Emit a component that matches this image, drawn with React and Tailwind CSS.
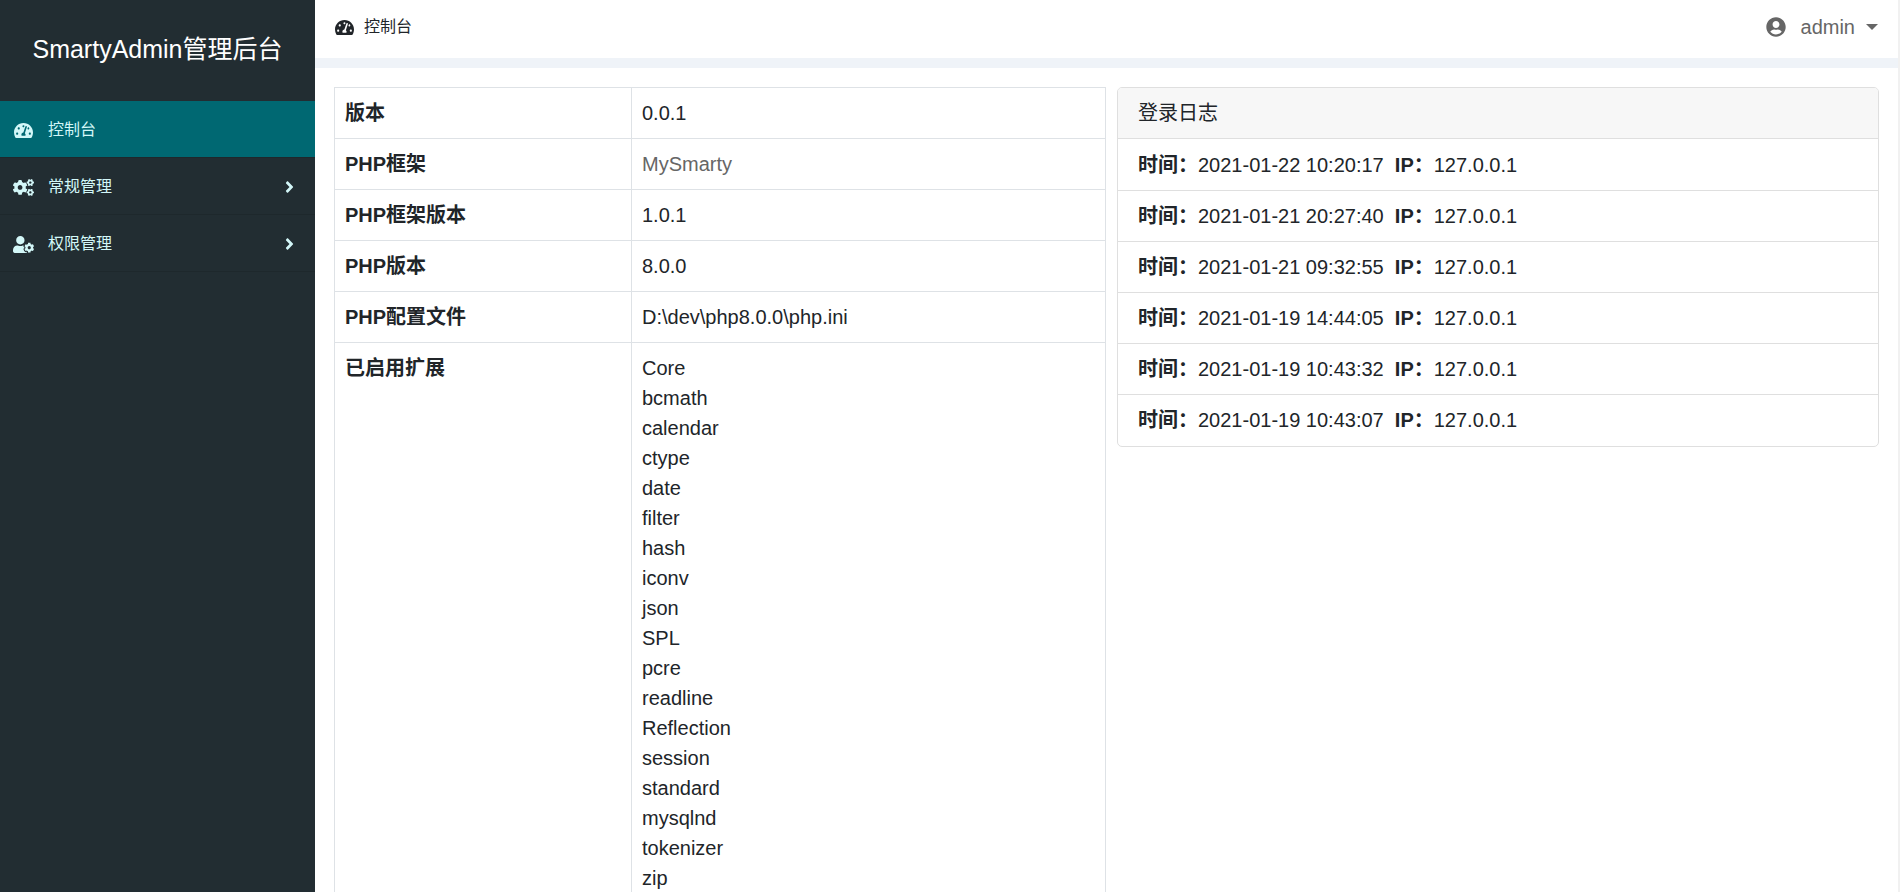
import { FaTachometerAlt, FaCogs, FaUserCog, FaAngleRight, FaUserCircle } from "react-icons/fa";

const menu = [
  { label: "控制台", icon: FaTachometerAlt, size: "h-[17px] w-[19px]", active: true },
  { label: "常规管理", icon: FaCogs, size: "h-[17px] w-[21px]", children: true },
  { label: "权限管理", icon: FaUserCog, size: "h-[17px] w-[21px]", children: true },
];

const info = [
  ["版本", "0.0.1"],
  ["PHP框架", "MySmarty", true],
  ["PHP框架版本", "1.0.1"],
  ["PHP版本", "8.0.0"],
  ["PHP配置文件", "D:\\dev\\php8.0.0\\php.ini"],
];

const extensions = [
  "Core", "bcmath", "calendar", "ctype", "date", "filter", "hash", "iconv", "json",
  "SPL", "pcre", "readline", "Reflection", "session", "standard", "mysqlnd", "tokenizer", "zip",
];

const logs = [
  "2021-01-22 10:20:17",
  "2021-01-21 20:27:40",
  "2021-01-21 09:32:55",
  "2021-01-19 14:44:05",
  "2021-01-19 10:43:32",
  "2021-01-19 10:43:07",
];

function Sidebar() {
  return (
    <aside className="w-[315px] shrink-0 bg-[#222d32]">
      <h1 className="flex h-[101px] items-center justify-center pb-1 text-[25px] text-white">SmartyAdmin管理后台</h1>
      <nav>
        {menu.map(({ label, icon: Icon, size, active, children }) => (
          <a
            key={label}
            href="#"
            className={
              "flex h-[57px] items-center border-b border-[#1e282c] pt-0.5 pr-[21px] pl-[11px] text-base text-[#d3f7f8] " +
              (active ? "bg-[#006872]" : "")
            }
          >
            <span className="flex w-6 justify-center">
              <Icon className={size} />
            </span>
            <span className="ml-[13px] grow">{label}</span>
            {children && <FaAngleRight className="h-[18px] w-[9px]" />}
          </a>
        ))}
      </nav>
    </aside>
  );
}

function Header() {
  return (
    <header className="flex h-[68px] shrink-0 items-center justify-between border-b-10 border-[#eff3f8] pr-5 pb-1 pl-5">
      <a href="#" className="flex items-center gap-[10px] text-base">
        <FaTachometerAlt className="h-[17px] w-[19px]" />
        控制台
      </a>
      <button type="button" className="flex items-center text-[20px] text-[#666]">
        <FaUserCircle />
        <span className="ml-[15px]">admin</span>
        <svg viewBox="0 0 12 6" className="ml-[11px] h-[6px] w-3 fill-current" aria-hidden="true">
          <path d="M0 0h12L6 6z" />
        </svg>
      </button>
    </header>
  );
}

function InfoTable() {
  return (
    <table className="w-full border-collapse text-left align-top">
      <tbody>
        {info.map(([name, value, link]) => (
          <tr key={name}>
            <th className="w-[297px] border border-[#dee2e6] p-[10px] font-bold">{name}</th>
            <td className="border border-[#dee2e6] p-[10px]">
              {link ? <a href="#" className="text-[#666]">{value}</a> : value}
            </td>
          </tr>
        ))}
        <tr>
          <th className="border border-[#dee2e6] p-[10px] align-top font-bold">已启用扩展</th>
          <td className="border border-[#dee2e6] p-[10px]">
            <ul>
              {extensions.map((name) => (
                <li key={name}>{name}</li>
              ))}
            </ul>
          </td>
        </tr>
      </tbody>
    </table>
  );
}

function LoginLog() {
  return (
    <section className="self-start overflow-hidden rounded-[5px] border border-[#dfdfdf]">
      <h2 className="border-b border-[#dfdfdf] bg-[#f7f7f7] px-5 py-[10px]">登录日志</h2>
      <ul className="divide-y divide-[#dfdfdf] py-px">
        {logs.map((time) => (
          <li key={time} className="px-5 py-[10px]">
            <b>时间：</b>
            {time}&nbsp; <b>IP：</b>127.0.0.1
          </li>
        ))}
      </ul>
    </section>
  );
}

export default function App() {
  return (
    <div className="flex h-screen overflow-hidden bg-white font-['Liberation_Sans','Noto_Sans_CJK_SC',sans-serif] text-[20px] leading-[30px] text-[#212529]">
      <Sidebar />
      <div className="flex min-w-0 grow flex-col border-r-2 border-[#f1f1f1]">
        <Header />
        <main className="grid min-h-0 grow grid-cols-[772fr_762fr] gap-[11px] overflow-hidden px-[19px] pt-[19px]">
          <InfoTable />
          <LoginLog />
        </main>
      </div>
    </div>
  );
}
